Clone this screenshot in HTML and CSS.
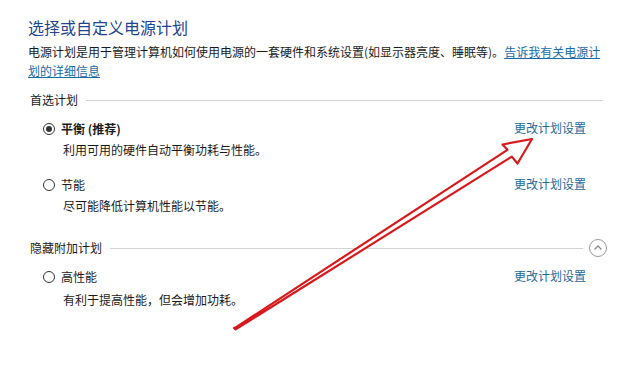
FILE: index.html
```html
<!DOCTYPE html>
<html lang="zh-CN">
<head>
<meta charset="utf-8">
<title>电源选项</title>
<link rel="stylesheet" href="styles.css">
</head>
<body>
<main class="page">
  <h1 class="title">选择或自定义电源计划</h1>
  <p class="intro">电源计划是用于管理计算机如何使用电源的一套硬件和系统设置(如显示器亮度、睡眠等)。<a class="intro-link" href="#">告诉我有关电源计划的详细信息</a></p>

  <div class="group-head">
    <span class="group-label">首选计划</span>
    <span class="group-line"></span>
  </div>

  <div class="plan">
    <div class="plan-row">
      <label class="plan-name plan-name--bold"><span class="radio radio--checked"></span>平衡 (推荐)</label>
      <a class="plan-link" href="#">更改计划设置</a>
    </div>
    <p class="plan-desc">利用可用的硬件自动平衡功耗与性能。</p>
  </div>

  <div class="plan">
    <div class="plan-row">
      <label class="plan-name"><span class="radio"></span>节能</label>
      <a class="plan-link" href="#">更改计划设置</a>
    </div>
    <p class="plan-desc">尽可能降低计算机性能以节能。</p>
  </div>

  <div class="group-head group-head--toggle">
    <span class="group-label">隐藏附加计划</span>
    <span class="group-line"></span>
    <span class="collapse-btn">
      <svg width="18" height="18" viewBox="0 0 18 18"><circle cx="9" cy="9" r="8.5" fill="#fff" stroke="#9a9a9a" stroke-width="1"/><path d="M5.5 10.5 L9 7 L12.5 10.5" fill="none" stroke="#8a8a8a" stroke-width="1.3"/></svg>
    </span>
  </div>

  <div class="plan">
    <div class="plan-row">
      <label class="plan-name"><span class="radio"></span>高性能</label>
      <a class="plan-link" href="#">更改计划设置</a>
    </div>
    <p class="plan-desc plan-desc--wide">有利于提高性能，但会增加功耗。</p>
  </div>

  <svg class="arrow" width="622" height="392" viewBox="0 0 622 392">
    <polygon points="234,328 235.4,327.6 507.4,149.8 502.5,144.5 532,139 517.5,163.5 511.8,156.6 235.6,329.4" fill="#fff" stroke="#d8191c" stroke-width="2.2" stroke-linejoin="round"/>
  </svg>
</main>
</body>
</html>
```

FILE: styles.css
```css
* { box-sizing: border-box; }
html, body { margin: 0; padding: 0; background: #fff; }
body {
  font-family: "Noto Sans CJK SC", "Noto Sans", sans-serif;
  color: #1a1a1a;
  width: 622px;
  height: 392px;
  overflow: hidden;
}
.page {
  position: relative;
  padding: 15px 19px 0 28px;
  height: 392px;
}
.title {
  margin: 0;
  font-size: 16px;
  line-height: 24px;
  font-weight: normal;
  color: #22448e;
}
.intro {
  margin: 3px 0 0;
  width: 576px;
  font-size: 12px;
  line-height: 19px;
}
.intro-link {
  color: #1a6aa5;
  text-decoration: underline;
}
.group-head {
  display: flex;
  align-items: center;
  gap: 8px;
  margin-top: 11px;
  padding-left: 2px;
  font-size: 12px;
  line-height: 18px;
}
.group-head--toggle {
  margin-top: 23px;
  margin-right: -4px;
}
.group-line {
  flex: 1;
  height: 0;
  border-top: 1px solid #d3d3d3;
}
.collapse-btn {
  display: flex;
  margin-left: -2px;
}
.plan {
  margin-top: 10px;
  padding-left: 15px;
  padding-right: 17px;
}
.plan + .plan { margin-top: 15px; }
.plan-row {
  display: flex;
  justify-content: space-between;
  align-items: center;
  font-size: 12px;
  line-height: 20px;
}
.plan-name {
  display: flex;
  align-items: center;
  gap: 6px;
}
.plan-name--bold { font-weight: bold; }
.radio {
  width: 12px;
  height: 12px;
  border: 1px solid #333;
  border-radius: 50%;
  display: flex;
  align-items: center;
  justify-content: center;
  background: #fff;
}
.radio--checked::after {
  content: "";
  width: 6px;
  height: 6px;
  border-radius: 50%;
  background: #333;
}
.plan-link {
  color: #1f6a96;
  text-decoration: none;
  margin-top: -2px;
}
.plan-desc {
  margin: 1px 0 0 20px;
  font-size: 12px;
  line-height: 20px;
}
.plan-desc--wide { margin-top: 3px; }
.arrow {
  position: absolute;
  left: 0;
  top: 0;
  pointer-events: none;
}
```
